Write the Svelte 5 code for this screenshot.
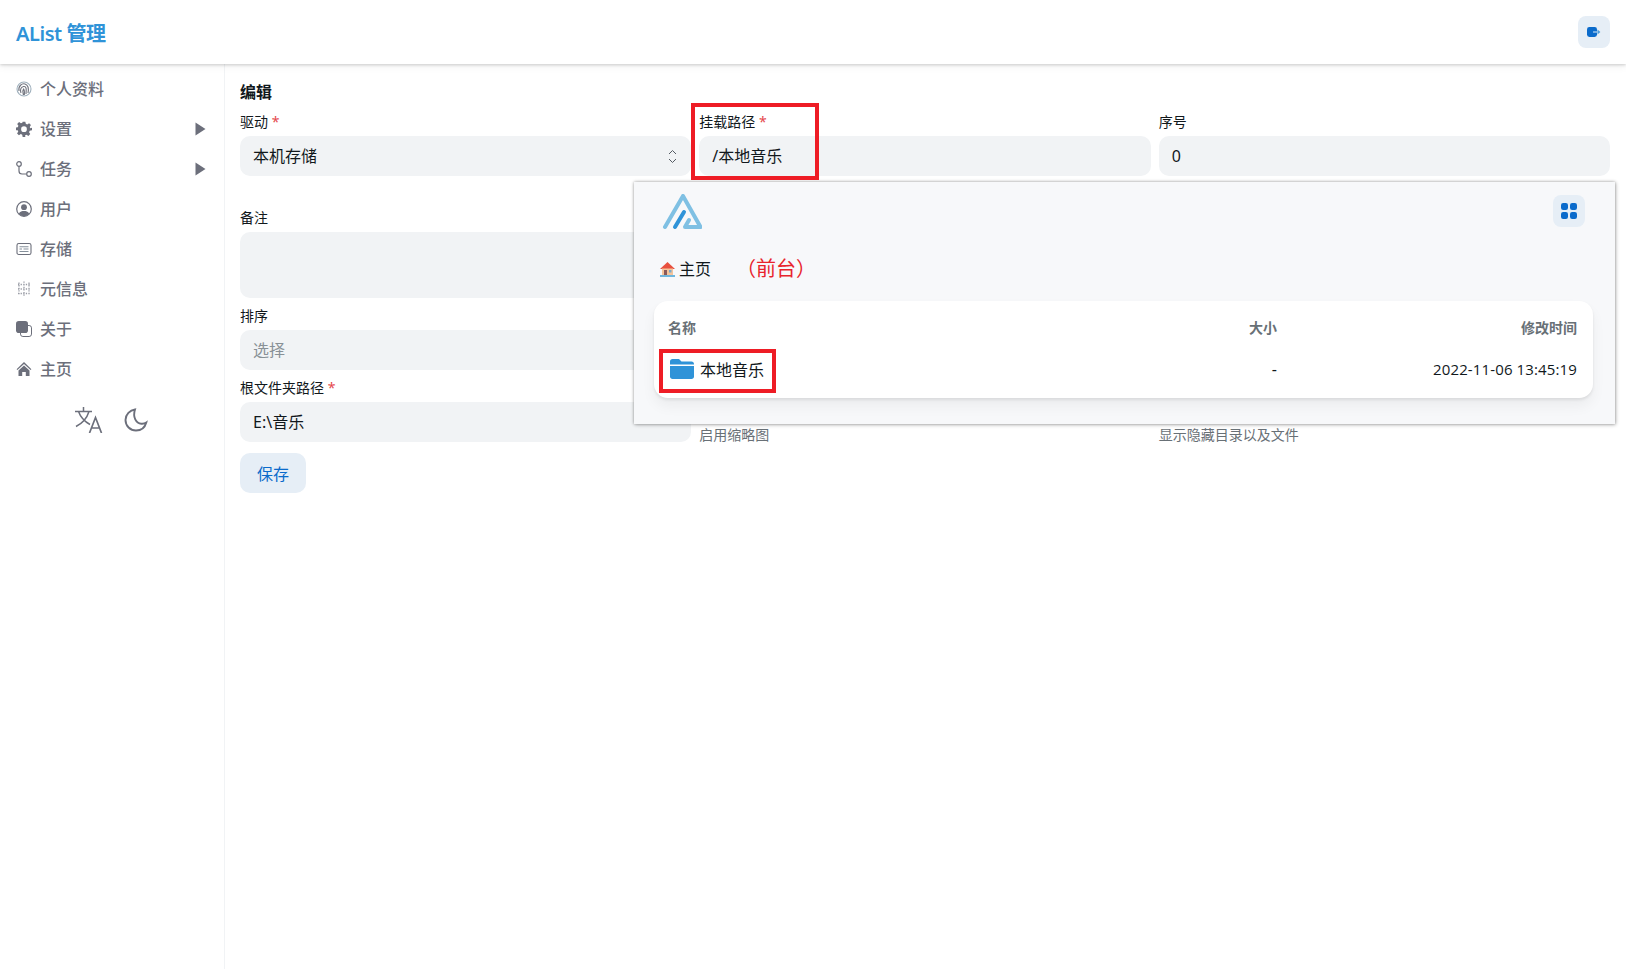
<script>
  const nav = [
    { label: '个人资料', icon: 'finger' },
    { label: '设置', icon: 'gear', arrow: true },
    { label: '任务', icon: 'route', arrow: true },
    { label: '用户', icon: 'user' },
    { label: '存储', icon: 'storage' },
    { label: '元信息', icon: 'meta' },
    { label: '关于', icon: 'about' },
    { label: '主页', icon: 'home' }
  ];
</script>

<div class="page">
  <header class="top">
    <h1>AList 管理</h1>
    <button class="icon-btn" aria-label="退出">
      <svg width="14" height="12" viewBox="0 0 14 12"><rect x="0" y="1" width="10" height="10" rx="2.4" fill="#0b6bcb"/><path d="M6 6h5" stroke="#bcd8f0" stroke-width="1.2"/><path d="M10.5 3.6 13.4 6l-2.9 2.4z" fill="#4d9ddd"/></svg>
    </button>
  </header>

  <div class="body">
    <aside class="side">
      <nav>
        {#each nav as item}
          <div class="nav-item">
            <span class="nav-icon">
              {#if item.icon === 'finger'}
                <svg width="16" height="16" viewBox="0 0 16 16" fill="none" stroke="#6f727d" stroke-width="1.100"><circle cx="8" cy="8" r="7" stroke="#9fb0bd"/><path d="M3 10c-1-5 3-8 6-7s4 4 3 9M5 12c-1-3-.5-6 2.500-6.500S10.500 8 10 13M7.500 14c-.5-2-1.500-4 0-6 1 1 1 4 .8 6"/></svg>
              {:else if item.icon === 'gear'}
                <svg width="16" height="16" viewBox="0 0 24 24"><path fill="#6c6f7b" fill-rule="evenodd" d="M10 1h4l.7 3.200 2.100.9 2.800-1.800 2.800 2.800-1.800 2.800.9 2.100L24 10v4l-3.500.7-.9 2.100 1.800 2.800-2.800 2.800-2.800-1.800-2.100.9L14 24h-4l-.7-3.500-2.100-.9-2.800 1.800-2.800-2.800 1.800-2.800-.9-2.100L-.5 14v-4l3.200-.7.9-2.100-1.800-2.800 2.800-2.800 2.800 1.800 2.100-.9zM12 8a4.300 4.300 0 1 0 0 8.600A4.300 4.300 0 0 0 12 8z"/></svg>
              {:else if item.icon === 'route'}
                <svg width="16" height="16" viewBox="0 0 16 16" fill="none" stroke="#6c6f7b" stroke-width="1.200"><circle cx="3" cy="3" r="2.300"/><circle cx="13" cy="13" r="2.300"/><path d="M3 5.500V10c0 2 1 3 3 3h4.500"/></svg>
              {:else if item.icon === 'user'}
                <svg width="16" height="16" viewBox="0 0 16 16"><circle cx="8" cy="8" r="7.300" fill="none" stroke="#6c6f7b" stroke-width="1.200"/><circle cx="8" cy="6.200" r="2.900" fill="#6c6f7b"/><path d="M2.800 12.600C4 10.500 6 10 8 10s4 .5 5.200 2.600C12 14.300 10 15.200 8 15.200s-4-.9-5.200-2.600z" fill="#6c6f7b"/></svg>
              {:else if item.icon === 'storage'}
                <svg width="16" height="16" viewBox="0 0 16 16" fill="none" stroke="#6c6f7b" stroke-width="1.100"><rect x="1" y="2.500" width="14" height="11" rx="1.800"/><path d="M3.500 5.800h9M3.500 8h2.500M7.500 8h5M3.500 10.500h9" stroke="#85909b"/></svg>
              {:else if item.icon === 'meta'}
                <svg width="16" height="16" viewBox="0 0 16 16" fill="none" stroke="#9a9da6" stroke-width="1.300" stroke-dasharray="1.300 1.300"><path d="M2 3.500h12M2 8h12M2 12.500h12M3 1.500v13M8 .5v15M13 1.500v13"/></svg>
              {:else if item.icon === 'about'}
                <svg width="16" height="16" viewBox="0 0 16 16"><rect x="4.500" y="4.500" width="11" height="11" rx="2.400" fill="none" stroke="#6c6f7b" stroke-width="1"/><rect x="0" y="0" width="12" height="12" rx="2.800" fill="#6c6f7b"/></svg>
              {:else}
                <svg width="16" height="16" viewBox="0 0 16 16"><path fill="#6c6f7b" d="M8 1 .6 8.200l.8.900L8 3l6.600 6.100.8-.9zM2.500 9.500 8 4.400l5.500 5.100V15H9.800v-4H6.200v4H2.500z"/></svg>
              {/if}
            </span>
            <span class="nav-text">{item.label}</span>
            {#if item.arrow}
              <svg class="arrow" width="11" height="14" viewBox="0 0 11 14"><path d="M0.500 0.500 10.500 7 0.500 13.500z" fill="#6c6f7b"/></svg>
            {/if}
          </div>
        {/each}
      </nav>
      <div class="tools">
        <svg width="28" height="26" viewBox="0 0 28 26" fill="none" stroke="#6c6f7b" stroke-width="1.500"><path d="M0 4.500h17M8.500 0v4.500M14 4.500C12 11 7 16.500 1 19.500M3.500 4.500C5.500 10 9.500 14.500 15 17.500"/><path d="M14.500 26 20.500 10.500 26.500 26M16.500 21h8" stroke-width="1.700"/></svg>
        <svg width="24" height="24" viewBox="0 0 24 24" fill="none" stroke="#6c6f7b" stroke-width="1.900"><path d="M11 1.500C6 2.200 1.500 6.500 1.500 12c0 6 4.800 10.500 10.500 10.500 5 0 9-3.200 10.300-8-1.500 1-3.200 1.400-5 1.200-5.200-.4-8.800-6.500-6.300-14.200z"/></svg>
      </div>
    </aside>

    <main class="main">
      <h2>编辑</h2>
      <div class="form">
        <div class="field first">
          <span class="label">驱动 <em>*</em></span>
          <div class="control select">
            本机存储
            <svg width="9" height="15" viewBox="0 0 9 15" fill="none" stroke="#555b63" stroke-width="1"><path d="M1 5 4.500 1.500 8 5M1 10l3.500 3.500L8 10"/></svg>
          </div>
        </div>
        <div class="field first">
          <span class="label">挂载路径 <em>*</em></span>
          <div class="control path">/本地音乐</div>
        </div>
        <div class="field first">
          <span class="label">序号</span>
          <div class="control">0</div>
        </div>

        <div class="field row-start">
          <span class="label">备注</span>
          <div class="control area"></div>
        </div>
        <div class="field row-start">
          <span class="label">排序</span>
          <div class="control placeholder">选择</div>
        </div>
        <div class="field row-start">
          <span class="label">根文件夹路径 <em>*</em></span>
          <div class="control">E:\音乐</div>
        </div>
        <div class="help col2">启用缩略图</div>
        <div class="help col3">显示隐藏目录以及文件</div>
      </div>
      <button class="save">保存</button>
    </main>
  </div>

  <section class="shot">
    <div class="shot-top">
      <svg class="logo" width="40" height="36" viewBox="0 0 40 36" fill="none" stroke-linecap="round" stroke-linejoin="round">
        <path d="M3 33 21 2 38.500 33H23L27 26" stroke="#7fc0e3" stroke-width="4"/>
        <path d="M13 33 22 18" stroke="#2f93d8" stroke-width="4"/>
      </svg>
      <button class="icon-btn grid-btn" aria-label="视图">
        <svg width="16" height="16" viewBox="0 0 16 16" fill="#0b6bcb"><rect width="7" height="7" rx="2.200"/><rect x="9" width="7" height="7" rx="2.200"/><rect y="9" width="7" height="7" rx="2.200"/><rect x="9" y="9" width="7" height="7" rx="2.200"/></svg>
      </button>
    </div>
    <div class="crumb">
      <svg width="17" height="16" viewBox="0 0 17 16"><path d="M8.500 1 1 8h15z" fill="#e8503e"/><rect x="3" y="7.500" width="11" height="6.500" fill="#f5c49a"/><rect x="5" y="9" width="3" height="5" fill="#8a5a5a"/><rect x="10" y="9" width="2.500" height="2.500" fill="#7aa9c9"/><rect x="1" y="14" width="15" height="2" fill="#6fb6dd"/></svg>
      <span class="crumb-home">主页</span>
      <span class="note">（前台）</span>
    </div>
    <div class="card">
      <div class="row head">
        <span>名称</span><span class="right">大小</span><span class="right">修改时间</span>
      </div>
      <div class="row">
        <span class="name">
          <svg width="24" height="20" viewBox="0 0 24 20"><path d="M0 2.500C0 1 1 0 2.500 0H9l2.500 2.500H21.500C23 2.500 24 3.500 24 5v.5H0z" fill="#2f93d8"/><path d="M0 7h24v10.500c0 1.500-1 2.500-2.500 2.500h-19C1 20 0 19 0 17.500z" fill="#2f93d8"/></svg>
          本地音乐
        </span>
        <span class="right">-</span>
        <span class="right date">2022-11-06 13:45:19</span>
      </div>
    </div>
  </section>

  <div class="mark mark-path"></div>
  <div class="mark mark-folder"></div>
</div>

<style>
  :global(body) {
    margin: 0;
    background: #fff;
  }
  .page {
    position: relative;
    height: 969px;
    overflow: hidden;
    font-family: "Noto Sans", "Noto Sans CJK SC", sans-serif;
    color: #11181c;
    font-size: 16px;
  }
  .top {
    height: 64px;
    box-sizing: border-box;
    padding: 0 16px 0 16px;
    display: flex;
    align-items: center;
    justify-content: space-between;
    background: #fff;
    box-shadow: 0 1px 3px rgba(0, 0, 0, 0.18), 0 3px 8px rgba(0, 0, 0, 0.05);
    position: relative;
    z-index: 2;
  }
  h1 {
    margin: 3px 0 0;
    font-size: 20px;
    line-height: 28px;
    font-weight: 600;
    letter-spacing: -0.45px;
    color: #2f93d8;
  }
  .icon-btn {
    width: 32px;
    height: 32px;
    padding: 0;
    border: 0;
    border-radius: 8px;
    background: #e6eef6;
    display: flex;
    align-items: center;
    justify-content: center;
  }
  .body {
    display: flex;
    height: 905px;
  }
  .side {
    width: 225px;
    flex: none;
    box-sizing: border-box;
    border-right: 1px solid #f1f3f5;
    padding-top: 5px;
  }
  .nav-item {
    height: 40px;
    display: flex;
    align-items: center;
    padding: 0 18px 0 16px;
    color: #6c6f7b;
    font-weight: 500;
  }
  .nav-icon {
    width: 16px;
    height: 16px;
    margin-right: 8px;
    display: flex;
  }
  .nav-text {
    flex: 1;
    line-height: 24px;
  }
  .arrow {
    flex: none;
  }
  .tools {
    display: flex;
    justify-content: center;
    align-items: center;
    gap: 21px;
    padding-top: 18px;
    padding-right: 1px;
  }
  .main {
    flex: 1;
    min-width: 0;
    padding: 16px 16px 0 15px;
  }
  h2 {
    margin: 0 0 8px;
    font-size: 16px;
    line-height: 24px;
    font-weight: 600;
  }
  .form {
    display: grid;
    grid-template-columns: repeat(3, 1fr);
    column-gap: 8px;
    row-gap: 8px;
    align-items: start;
  }
  .field {
    display: flex;
    flex-direction: column;
  }
  .first {
    min-height: 88px;
  }
  .row-start {
    grid-column: 1;
  }
  .label {
    font-size: 14px;
    line-height: 20px;
    margin-bottom: 4px;
    font-weight: 400;
  }
  em {
    color: #e5484d;
    font-style: normal;
  }
  .control {
    height: 40px;
    box-sizing: border-box;
    background: #f1f3f5;
    border-radius: 10px;
    padding: 0 13px;
    display: flex;
    align-items: center;
    line-height: 24px;
  }
  .select {
    padding: 0 14px 0 13px;
    justify-content: space-between;
  }
  .area {
    height: 66px;
  }
  .placeholder {
    color: #889096;
    padding-left: 13px;
  }
  .help {
    font-size: 14px;
    line-height: 20px;
    color: #687076;
    grid-row: 4;
    align-self: end;
    height: 20px;
    margin-top: 47px;
  }
  .col2 { grid-column: 2; }
  .col3 { grid-column: 3; }
  .save {
    margin-top: 8px;
    width: 66px;
    height: 40px;
    padding: 0;
    border: 0;
    border-radius: 10px;
    background: #e6eef6;
    color: #0b6bcb;
    font: inherit;
    font-weight: 400;
  }
  .shot {
    position: absolute;
    left: 634px;
    top: 182px;
    width: 981px;
    height: 242px;
    box-sizing: border-box;
    padding: 12px 22px 0 20px;
    background: #f7f8fa;
    box-shadow: 0 0 3px rgba(0, 0, 0, 0.35), 1px 1px 4px rgba(0, 0, 0, 0.18);
    z-index: 3;
  }
  .shot-top {
    height: 36px;
    display: flex;
    justify-content: space-between;
    align-items: flex-start;
    padding-left: 8px;
    padding-right: 8px;
  }
  .logo {
    display: block;
  }
  .grid-btn {
    margin-top: 1px;
  }
  .crumb {
    margin-top: 27px;
    height: 24px;
    display: flex;
    align-items: center;
    padding-left: 5px;
  }
  .crumb-home {
    margin-left: 3px;
    line-height: 24px;
  }
  .note {
    margin-left: 25px;
    color: #e8242c;
    font-size: 20px;
    line-height: 24px;
  }
  .card {
    margin-top: 20px;
    background: #fff;
    border-radius: 14px;
    padding: 3px 16px 9px 14px;
    box-shadow: 0 2px 3px rgba(0, 0, 0, 0.08), 0 8px 14px rgba(0, 0, 0, 0.05);
  }
  .row {
    display: grid;
    grid-template-columns: 1fr 100px 300px;
    height: 40px;
    align-items: center;
  }
  .head {
    height: 45px;
    font-size: 14px;
    font-weight: 700;
    color: #687076;
  }
  .right {
    text-align: right;
  }
  .name {
    display: flex;
    align-items: center;
    gap: 6px;
    padding-left: 2px;
  }
  .date {
    font-family: "Open Sans", sans-serif;
    font-size: 15px;
    letter-spacing: 0.13px;
  }
  .mark {
    position: absolute;
    box-sizing: border-box;
    border: 4px solid #ee1c25;
    z-index: 4;
  }
  .mark-path {
    left: 691px;
    top: 103px;
    width: 128px;
    height: 77px;
  }
  .mark-folder {
    left: 659px;
    top: 349px;
    width: 117px;
    height: 44px;
  }
</style>
